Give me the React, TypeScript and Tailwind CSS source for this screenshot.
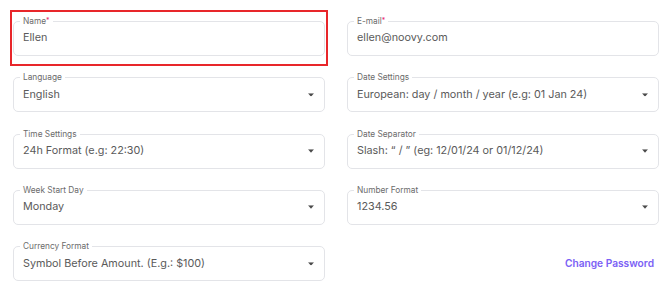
import type { ReactNode } from 'react'

function Caret() {
  return (
    <svg width="6" height="3.5" viewBox="0 0 6 3.5" className="absolute right-[10px] top-1/2 -translate-y-1/2">
      <path d="M0 0 L6 0 L3 3.5 Z" fill="#4a4a4a" />
    </svg>
  )
}

function Field({
  label,
  value,
  required,
  select,
  highlight,
}: {
  label: string
  value: string
  required?: boolean
  select?: boolean
  highlight?: boolean
}) {
  return (
    <div
      className={`h-[56.3px] border-2 px-[1px] pt-[9px] ${
        highlight ? 'border-[#e8262a]' : 'border-transparent'
      }`}
    >
      <div className="relative h-[35px] rounded-[5px] border border-[#e3e4e8] flex items-center pl-[9px]">
        <span className="absolute -top-[6px] left-[6px] bg-white px-[3px] text-[8.3px] leading-[10px] text-[#6b6b6b]">
          {label}
          {required && <span className="text-[#e8266b] align-top text-[7px]">*</span>}
        </span>
        <span className="text-[10.8px] text-[#5a5a5a] whitespace-nowrap">{value}</span>
        {select && <Caret />}
      </div>
    </div>
  )
}

function Cell({ children }: { children: ReactNode }) {
  return (
    <div className="h-[56.3px] border-2 border-transparent px-[1px] pt-[9px]">
      <div className="h-[35px] flex items-center justify-end pr-[5px]">{children}</div>
    </div>
  )
}

export default function App() {
  return (
    <div className="w-[670px] h-[294px] bg-white font-['Inter',sans-serif]">
      <div className="grid grid-cols-[318px_318px] gap-x-[16px] pl-[10px] pt-[10px]">
        <Field label="Name" value="Ellen" required highlight />
        <Field label="E-mail" value="ellen@noovy.com" required />
        <Field label="Language" value="English" select />
        <Field label="Date Settings" value="European: day / month / year (e.g: 01 Jan 24)" select />
        <Field label="Time Settings" value="24h Format (e.g: 22:30)" select />
        <Field label="Date Separator" value={'Slash: “ / ” (eg: 12/01/24 or 01/12/24)'} select />
        <Field label="Week Start Day" value="Monday" select />
        <Field label="Number Format" value="1234.56" select />
        <Field label="Currency Format" value="Symbol Before Amount. (E.g.: $100)" select />
        <Cell>
          <button className="text-[10.2px] font-semibold text-[#7b61f5]">Change Password</button>
        </Cell>
      </div>
    </div>
  )
}
